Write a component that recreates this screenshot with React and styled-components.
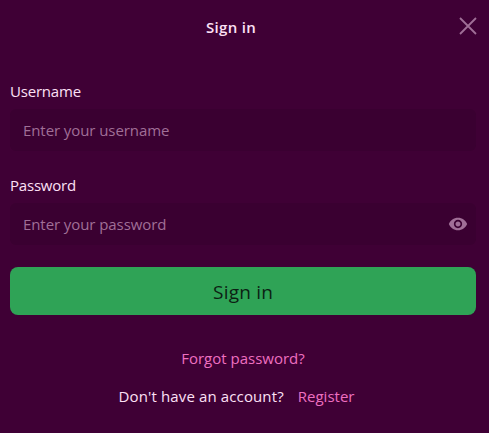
import React from "react";
import styled, { createGlobalStyle } from "styled-components";

const Global = createGlobalStyle`
  html, body { margin: 0; padding: 0; background: #3f0035; }
  * { box-sizing: border-box; }
`;

const font = `"Open Sans", "Noto Sans", "Liberation Sans", sans-serif`;

const Dialog = styled.div`
  width: 489px;
  height: 433px;
  background: #3f0035;
  font-family: ${font};
  padding: 0 13px 0 10px;
  overflow: hidden;
`;
const Header = styled.header`
  display: flex;
  align-items: center;
  height: 53px;
`;
const Title = styled.h1`
  flex: 1;
  margin: 0;
  text-align: center;
  font-size: 15px;
  font-weight: 600;
  letter-spacing: 0.3px;
  color: #fde0f5;
`;
const Close = styled.button`
  display: flex;
  width: 18px;
  height: 18px;
  margin: -1px -1px 0 7px;
  padding: 0;
  border: 0;
  background: none;
  color: #a06f97;
`;
const Form = styled.form`
  display: flex;
  flex-direction: column;
  margin-top: 28px;
`;
const Field = styled.div`
  display: flex;
  flex-direction: column;
  gap: 8px;
  margin-bottom: 24px;
`;
const Label = styled.label`
  font-size: 15px;
  font-weight: 500;
  line-height: 20px;
  letter-spacing: -0.2px;
  color: #fde0f5;
`;
const InputWrap = styled.div`
  display: flex;
  align-items: center;
  height: 42px;
  padding: 0 8px 0 13px;
  border-radius: 6px;
  background: #3a0031;
`;
const Input = styled.input`
  flex: 1;
  min-width: 0;
  border: 0;
  outline: 0;
  background: none;
  padding: 0;
  font: 15px ${font};
  letter-spacing: -0.08px;
  color: #fde0f5;
  &::placeholder { color: #a06f97; opacity: 1; }
`;
const Eye = styled.button`
  display: flex;
  width: 20px;
  height: 20px;
  padding: 0;
  border: 0;
  background: none;
  color: #a06f97;
`;
const Submit = styled.button`
  height: 48px;
  margin-top: -2px;
  padding: 2px 0 0;
  border: 0;
  border-radius: 8px;
  background: #2fa356;
  font: 19px ${font};
  letter-spacing: 0.2px;
  color: #0c1f14;
`;
const Links = styled.div`
  display: flex;
  flex-direction: column;
  align-items: center;
  gap: 18px;
  margin-top: 33px;
`;
const Link = styled.a`
  font-size: 15px;
  line-height: 20px;
  color: #ee6fc0;
`;
const Row = styled.div`
  display: flex;
  gap: 14px;
  padding-right: 13px;
  font-size: 15px;
  font-weight: 500;
  line-height: 20px;
  color: #fde0f5;
`;
const Prompt = styled.span`
  letter-spacing: 0.13px;
`;

export default function App() {
  return (
    <>
      <Global />
      <Dialog>
        <Header>
          <Title>Sign in</Title>
          <Close type="button" aria-label="Close">
            <svg width="18" height="18" viewBox="0 0 18 18" fill="none" stroke="currentColor" strokeWidth="1.8">
              <path d="M1 1l16 16M17 1L1 17" />
            </svg>
          </Close>
        </Header>
        <Form>
          <Field>
            <Label>Username</Label>
            <InputWrap>
              <Input placeholder="Enter your username" />
            </InputWrap>
          </Field>
          <Field>
            <Label>Password</Label>
            <InputWrap>
              <Input type="password" placeholder="Enter your password" />
              <Eye type="button" aria-label="Show password">
                <svg width="20" height="20" viewBox="0 0 24 24" fill="currentColor">
                  <path d="M12 4.5C7 4.5 2.73 7.61 1 12c1.73 4.39 6 7.5 11 7.5s9.27-3.11 11-7.5c-1.73-4.39-6-7.5-11-7.5zM12 17c-2.76 0-5-2.24-5-5s2.24-5 5-5 5 2.24 5 5-2.24 5-5 5zm0-8c-1.66 0-3 1.34-3 3s1.34 3 3 3 3-1.34 3-3-1.34-3-3-3z" />
                </svg>
              </Eye>
            </InputWrap>
          </Field>
          <Submit type="button">Sign in</Submit>
        </Form>
        <Links>
          <Link>Forgot password?</Link>
          <Row>
            <Prompt>Don't have an account?</Prompt>
            <Link>Register</Link>
          </Row>
        </Links>
      </Dialog>
    </>
  );
}
